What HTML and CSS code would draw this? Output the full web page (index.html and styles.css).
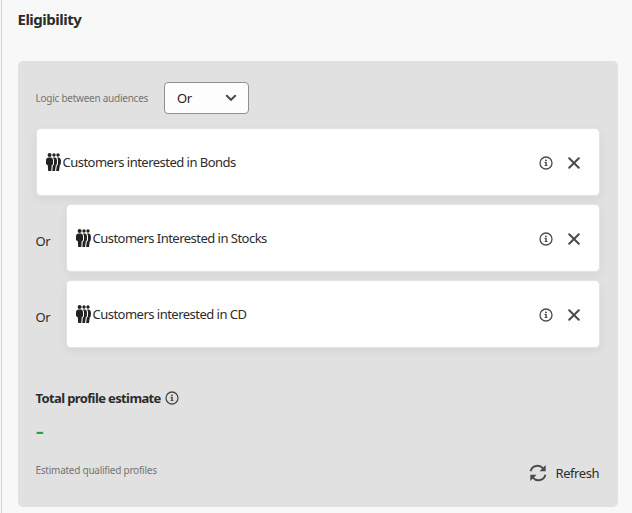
FILE: index.html
```html
<!DOCTYPE html>
<html lang="en">
<head>
<meta charset="utf-8">
<title>Eligibility</title>
<link rel="stylesheet" href="styles.css">
</head>
<body>
<svg class="defs" aria-hidden="true">
  <symbol id="info" viewBox="0 0 14 14">
    <circle cx="7" cy="7" r="6" fill="none" stroke="currentColor" stroke-width="1.3"/>
    <circle cx="6.9" cy="4.4" r=".95" fill="currentColor"/>
    <path d="M5.5 6H7.8V9.2H8.6V10.1H5.5V9.2H6.3V6.9H5.5Z" fill="currentColor"/>
  </symbol>
  <symbol id="close" viewBox="0 0 12 12">
    <path d="M1.2 1.2 10.8 10.8M10.8 1.2 1.2 10.8" fill="none" stroke="currentColor" stroke-width="2" stroke-linecap="round"/>
  </symbol>
  <symbol id="people" viewBox="0 0 15 18">
    <circle cx="3.6" cy="2" r="2"/><circle cx="8" cy="2" r="1.7"/><circle cx="12" cy="2" r="1.7"/>
    <path d="M2 4.5H5.3Q7 5 7 7V11.3L5.7 12.2 5.3 18H2.2L1.8 12.2 0 11V7Q0 5 2 4.5Z"/>
    <path d="M6.8 4.5H9.2Q11 5 11 7.5L10.8 11.5 9.8 12.3 9 18H6.4L6.7 12.8 8 11.5V7Q8 5.5 6.8 4.5Z"/>
    <path d="M10.9 4.5H13Q15 5 15 8L14.7 11.5 13.8 12.3 13 18H10.1L10.8 12.8 12 11.5V7Q12 5.5 10.9 4.5Z"/>
  </symbol>
</svg>
<main class="page">
  <h1 class="title">Eligibility</h1>
  <section class="panel">
    <div class="logic">
      <span class="caption logic-label">Logic between audiences</span>
      <button class="picker"><span>Or</span><svg class="chevron" viewBox="0 0 12 8"><path d="M1.8 1.8 6 5.8 10.2 1.8" fill="none" stroke="currentColor" stroke-width="2" stroke-linecap="round"/></svg></button>
    </div>
    <div class="audiences">
      <div class="row">
        <div class="card"><svg class="people"><use href="#people"/></svg><span class="name">Customers interested in Bonds</span><svg class="info"><use href="#info"/></svg><svg class="close"><use href="#close"/></svg></div>
      </div>
      <div class="row">
        <span class="or">Or</span>
        <div class="card"><svg class="people"><use href="#people"/></svg><span class="name">Customers Interested in Stocks</span><svg class="info"><use href="#info"/></svg><svg class="close"><use href="#close"/></svg></div>
      </div>
      <div class="row">
        <span class="or">Or</span>
        <div class="card"><svg class="people"><use href="#people"/></svg><span class="name">Customers interested in CD</span><svg class="info"><use href="#info"/></svg><svg class="close"><use href="#close"/></svg></div>
      </div>
    </div>
    <div class="estimate"><h2 class="estimate-title">Total profile estimate</h2><svg class="info"><use href="#info"/></svg></div>
    <div class="value">–</div>
    <div class="footer">
      <span class="caption qualified">Estimated qualified profiles</span>
      <button class="refresh"><svg class="refresh-icon" viewBox="0 0 18 18"><path d="M1.6 7.2A7.1 7.1 0 0 1 14 4.4M16.4 10.8A7.1 7.1 0 0 1 4 13.6" fill="none" stroke="currentColor" stroke-width="1.9"/><path d="M16.7 1V7.2H10.5ZM1.3 17V10.8H7.5Z" fill="currentColor"/></svg><span>Refresh</span></button>
    </div>
  </section>
</main>
</body>
</html>
```
FILE: styles.css
```css
* { box-sizing: border-box; }
body {
  margin: 0;
  background: #f8f8f8;
  color: #2c2c2c;
  font: 13px/20px "Noto Sans", "Open Sans", sans-serif;
  overflow: hidden;
}
svg { display: block; flex: none; }
.defs { position: absolute; width: 0; height: 0; }
.page {
  height: 513px;
  margin-left: 1px;
  border-left: 1px solid #d5d5d5;
  padding: 9px 14px 0 16px;
}
.title {
  margin: 0 0 32px -0.5px;
  font-size: 15px;
  line-height: 20px;
  font-weight: 700;
  letter-spacing: -0.5px;
}
.panel {
  height: 446px;
  padding: 21px 18px 0;
  border-radius: 5px;
  background: #e1e1e1;
}
.logic { display: flex; align-items: center; height: 32px; }
.caption { margin-left: -0.5px; font-size: 10px; color: #747474; white-space: nowrap; }
.logic-label { width: 128.5px; letter-spacing: -0.25px; }
.picker {
  display: flex;
  align-items: center;
  justify-content: space-between;
  width: 85px;
  height: 32px;
  padding: 0 11px 0 12px;
  border: 1px solid #909090;
  border-radius: 4px;
  background: #fdfdfd;
  color: #222;
  font: inherit;
  letter-spacing: -0.3px;
}
.chevron { width: 12px; height: 8px; color: #4b4b4b; }
.audiences { display: grid; gap: 8px; margin-top: 14px; }
.row { display: flex; height: 68px; }
.or { width: 30.5px; margin-left: -0.5px; padding-top: 27px; letter-spacing: -0.5px; }
.card {
  display: flex;
  align-items: center;
  flex: 1;
  padding: 0 19px 0 9px;
  border: 1px solid #e4e4e4;
  border-radius: 4px;
  background: #fff;
  background-clip: padding-box;
  box-shadow: 0 3px 10px rgba(0, 0, 0, .06);
}
.people { width: 15px; height: 18px; fill: #222; }
.name { flex: 1; margin-left: 1.5px; letter-spacing: -0.52px; white-space: nowrap; }
.info { width: 14px; height: 14px; color: #4b4b4b; }
.card .info { margin: 2px 15px 0 0; }
.close { width: 12px; height: 12px; margin-top: 2px; color: #4b4b4b; }
.estimate { display: flex; align-items: center; gap: 4px; height: 20px; margin-top: 40px; }
.estimate-title { width: 125.5px; margin: 0 0 0 -0.5px; font-size: 13px; font-weight: 700; letter-spacing: -0.62px; white-space: nowrap; }
.value { margin-top: 13px; height: 20px; color: #2d9d4a; font-size: 15px; font-weight: 900; }
.footer { display: flex; align-items: center; justify-content: space-between; height: 32px; margin-top: 16px; }
.qualified { margin-top: -6px; letter-spacing: -0.25px; }
.refresh {
  display: flex;
  align-items: center;
  gap: 9px;
  padding: 0 1px 0 0;
  border: 0;
  background: none;
  color: #2c2c2c;
  font: inherit;
  letter-spacing: -0.45px;
}
.refresh-icon { width: 18px; height: 18px; color: #4b4b4b; }
```
